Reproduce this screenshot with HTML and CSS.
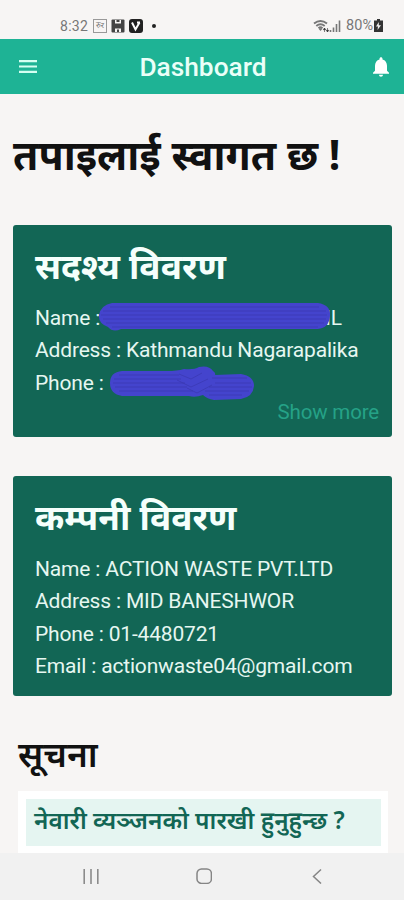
FILE: index.html
```html
<!DOCTYPE html>
<html lang="ne">
<head>
  <meta charset="UTF-8"/>
  <meta name="viewport" content="width=device-width, initial-scale=1"/>
  <title>Dashboard</title>
  <link rel="stylesheet" href="styles.css">
</head>
<body>
  <div class="phone">
    <div class="status-bar">
      <div class="status-left">
        <span class="clock">8:32</span>
        <span class="notif-app">रुर</span>
        <svg class="notif-icon" viewBox="0 0 14 14">
          <rect x="0.5" y="0.5" width="13" height="13" rx="1" fill="#444"/>
          <path d="M4 1v3.500h6V1M4 13V9.500h6V13" fill="#f7f5f4"/>
          <path d="M5.500 1h3v2h-3zM6 10.500h2V13H6z" fill="#444"/>
        </svg>
        <svg class="notif-icon" viewBox="0 0 14 14">
          <rect width="14" height="14" rx="3" fill="#222"/>
          <path d="M3 3.5l3.5 7 4-7M8 3.5h3" fill="none" stroke="#fff" stroke-width="2"/>
        </svg>
        <span class="dot"></span>
      </div>
      <div class="status-right">
        <svg class="wifi" viewBox="0 0 17 14">
          <path d="M1 4.5Q7.5-.5 14 4.5M3.3 7Q7.5 3.5 11.7 7M5.5 9.2Q7.5 7.5 9.5 9.2" fill="none" stroke="#777" stroke-width="2"/>
          <path d="M7.5 12L5.8 10q1.7-1.3 3.4 0z" fill="#777"/>
          <path d="M11.5 9v4M11.5 9l-1.2 1.7h2.4zM14.5 13V9M14.5 13l-1.2-1.7h2.4z" fill="#333" stroke="#333" stroke-width=".6"/>
        </svg>
        <svg class="signal" viewBox="0 0 12 12">
          <path d="M1.5 12v-2M4.5 12V7.5M7.5 12V4M10.5 12V.5" stroke="#777" stroke-width="1.6"/>
        </svg>
        <span class="battery-text">80%</span>
        <svg class="battery" viewBox="0 0 9 13">
          <path d="M3 0h3v1.5h3V13H0V1.5h3z" fill="#333"/>
          <path d="M4.8 3L2 7.5h2L3.5 11 7 6.3H4.8z" fill="#eee"/>
        </svg>
      </div>
    </div>

    <header class="app-bar">
      <svg class="menu-icon" viewBox="0 0 18 13">
        <path d="M0 1.2h18M0 6.5h18M0 11.8h18" stroke="#d5fff2" stroke-width="2.2"/>
      </svg>
      <h1>Dashboard</h1>
      <svg class="bell-icon" viewBox="4 2.5 16 19.5">
        <path d="M12 22c1.1 0 2-.9 2-2h-4c0 1.1.89 2 2 2zm6-6v-5c0-3.07-1.64-5.64-4.5-6.32V4c0-.83-.67-1.5-1.5-1.5s-1.5.67-1.5 1.5v.68C7.63 5.36 6 7.92 6 11v5l-2 2v1h16v-1l-2-2z" fill="#fff"/>
      </svg>
    </header>

    <main class="content">
      <h2 class="welcome">तपाइलाई स्वागत छ !</h2>

      <section class="card member">
        <h3>सदश्य विवरण</h3>
        <p class="name-row">Name :<svg class="scribble-name" viewBox="0 0 234 30">
          <path d="M14 1H220Q233 3 232 14 231 26 220 27H23Q15 31 10 25 0 21 1 13 3 3 14 1z" fill="#4444cd"/>
          <path d="M12 5H221M5 9H228M3 13H229M5 17H228M8 21H226M14 25H220" stroke="#3a38b0" stroke-width=".7"/>
        </svg>IL</p>
        <p>Address : Kathmandu Nagarapalika</p>
        <p class="phone-row">Phone :<svg class="scribble-phone" viewBox="0 0 146 34">
          <path d="M13 5H58Q68 5 75 3 85 4 90 1 100-1 104 5 107 7 106 9L132 8Q145 10 145 20 144 31 132 33L105 34Q98 33 94 29 86 32 80 30H13Q1 28 1 17 1 6 13 5z" fill="#4444cd"/>
          <path d="M10 9H70M5 13H72M4 17H76M6 21H78M10 25H84M103 12H138M106 17H142M100 21H143M96 25H140M100 29H133M70 8l12 5 11-6M68 14l14 7 17-8M78 22l10 5 15-8" fill="none" stroke="#3a38b0" stroke-width=".7"/>
        </svg></p>
        <a class="show-more">Show more</a>
      </section>

      <section class="card company">
        <h3>कम्पनी विवरण</h3>
        <p>Name : ACTION WASTE PVT.LTD</p>
        <p>Address : MID BANESHWOR</p>
        <p>Phone : 01-4480721</p>
        <p>Email : actionwaste04@gmail.com</p>
      </section>

      <h2 class="notice-title">सूचना</h2>
      <section class="notice">
        <div class="notice-item">नेवारी व्यञ्जनको पारखी हुनुहुन्छ ?</div>
      </section>
    </main>

    <nav class="nav-bar">
      <svg viewBox="0 0 16 16"><path d="M1.2 1v15M8 1v15M14.8 1v15" stroke="#8b8b8b" stroke-width="1.6"/></svg>
      <svg viewBox="0 0 16 16"><rect x="1" y="1" width="14.4" height="14.4" rx="4.5" fill="none" stroke="#858585" stroke-width="1.5"/></svg>
      <svg viewBox="0 0 16 16"><path d="M12 1.500L4.5 8.500l7.500 7" fill="none" stroke="#858585" stroke-width="1.5"/></svg>
    </nav>
  </div>
</body>
</html>
```
FILE: styles.css
```css
:root {
  --bg-page: #f7f5f4;
  --green: #1eb395;
  --green-dark: #126655;
}

* { box-sizing:border-box; margin:0; padding:0 }
body {
  font-family:Roboto,'Noto Sans',sans-serif;
  background: var(--bg-page);
  color:#111;
}
svg { display:block; flex:none }

.phone {
  display:flex;
  flex-direction:column;
  height:900px;
  overflow:hidden;
}

/* STATUS BAR */
.status-bar {
  display:flex;
  justify-content:space-between;
  flex:none;
  height:39px;
  padding:12px 21px 0 60px;
  font-size:14px;
  color:#777;
}
.status-left, .status-right {
  display:flex;
  align-items:center;
  height:27px;
}
.clock { width:33px; letter-spacing:.3px }
.notif-app {
  width:14px;
  height:14px;
  margin-right:4px;
  border:1px solid #999;
  font-size:8px;
  line-height:12px;
  text-align:center;
  overflow:hidden;
}
.notif-icon {
  width:14px;
  height:14px;
  margin-right:4px;
}
.dot {
  width:4px;
  height:4px;
  margin-left:5px;
  border-radius:50%;
  background:#222;
}
.wifi { width:17px; height:14px; margin-right:-1px }
.signal { width:12px; height:12px; margin:0 5px 0 0 }
.battery-text { font-size:14.500px }
.battery { width:9px; height:13px; margin-left:1px }

/* APP BAR */
.app-bar {
  display:flex;
  align-items:center;
  justify-content:space-between;
  flex:none;
  height:55px;
  padding:0 15px 0 19px;
  background: var(--green);
}
.app-bar h1 {
  margin-right:4px;
  font-size:26.300px;
  font-weight:500;
  color:#eafff8;
}
.menu-icon { width:18px; height:13px }
.bell-icon { width:16px; height:20px }

/* CONTENT */
.content {
  flex:1;
  min-height:0;
  overflow:hidden;
  padding:32px 12px 0 13px;
}
.welcome {
  height:99px;
  font-family:'Noto Sans',sans-serif;
  font-size:41px;
  line-height:56px;
  font-weight:700;
}
.card {
  padding:17px 13px 0 22px;
  border-radius:3px;
  background: var(--green-dark);
  color:#e6f7f1;
  font-size:21px;
  letter-spacing:-.17px;
  line-height:32.400px;
  white-space:nowrap;
}
.card h3 {
  height:60px;
  font-family:'Noto Sans',sans-serif;
  font-size:35.300px;
  line-height:46px;
  letter-spacing:0;
  font-weight:700;
  color:#f5fffc;
}
.member {
  height:212px;
  margin-bottom:39px;
}
.company { height:220px }
.name-row, .phone-row {
  display:flex;
  align-items:center;
}
.scribble-name {
  position:relative;
  width:234px;
  height:30px;
  margin:-2px -7px 0 -2px;
  z-index:1;
}
.scribble-phone {
  width:146px;
  height:34px;
  margin:-1px 0 -1px 5px;
}
.show-more {
  display:block;
  margin-top:-3px;
  text-align:right;
  font-size:20.500px;
  color:#25a287;
}

/* NOTICE */
.notice-title {
  height:95px;
  padding:32px 0 0 5px;
  font-family:'Noto Sans',sans-serif;
  font-size:35.300px;
  line-height:50px;
  font-weight:650;
}
.notice {
  height:100px;
  margin:0 4px 0 5px;
  padding:8px 7px 0 8px;
  background:#fff;
}
.notice-item {
  height:47px;
  padding-left:8px;
  background:#e5f5f1;
  color:#126655;
  font-family:'Noto Sans',sans-serif;
  font-size:24.300px;
  line-height:41px;
  font-weight:600;
  white-space:nowrap;
}

/* SYSTEM NAVIGATION */
.nav-bar {
  display:flex;
  justify-content:space-between;
  flex:none;
  height:47px;
  padding:15px 79px 0 83px;
  background:#f1f1f1;
}
.nav-bar svg { width:16px; height:16px }
```
